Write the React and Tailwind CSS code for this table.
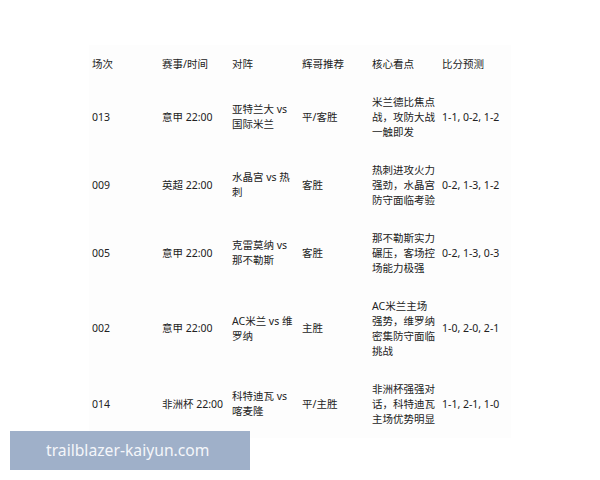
import React from 'react';

const rows = [
  { no: '013', match: '意甲 22:00', teams: '亚特兰大 vs 国际米兰', pick: '平/客胜', note: '米兰德比焦点战，攻防大战一触即发', score: '1-1, 0-2, 1-2' },
  { no: '009', match: '英超 22:00', teams: '水晶宫 vs 热刺', pick: '客胜', note: '热刺进攻火力强劲，水晶宫防守面临考验', score: '0-2, 1-3, 1-2' },
  { no: '005', match: '意甲 22:00', teams: '克雷莫纳 vs 那不勒斯', pick: '客胜', note: '那不勒斯实力碾压，客场控场能力极强', score: '0-2, 1-3, 0-3' },
  { no: '002', match: '意甲 22:00', teams: 'AC米兰 vs 维罗纳', pick: '主胜', note: 'AC米兰主场强势，维罗纳密集防守面临挑战', score: '1-0, 2-0, 2-1' },
  { no: '014', match: '非洲杯 22:00', teams: '科特迪瓦 vs 喀麦隆', pick: '平/主胜', note: '非洲杯强强对话，科特迪瓦主场优势明显', score: '1-1, 2-1, 1-0' },
];

const headers = ['场次', '赛事/时间', '对阵', '辉哥推荐', '核心看点', '比分预测'];

const Row = ({ cells }) => (
  <div className="grid grid-cols-[repeat(6,70px)] items-center">
    {cells.map((c, i) => (
      <div key={i} className="px-[3px] py-[11.5px]">
        {c}
      </div>
    ))}
  </div>
);

export default function App() {
  return (
    <div
      className="relative w-[600px] h-[480px] bg-white overflow-hidden text-[#222] text-[10.5px] leading-[15px]"
      style={{ fontFamily: '"Noto Sans", "Noto Sans CJK SC", sans-serif' }}
    >
      <div className="ml-[89px] mt-[45px] w-[422px] bg-[#fdfdfd]">
        <Row cells={headers} />
        {rows.map((r) => (
          <Row key={r.no} cells={[r.no, r.match, r.teams, r.pick, r.note, r.score]} />
        ))}
      </div>

      {/* watermark */}
      <div className="absolute left-[10px] top-[431px] w-[240px] h-[39px] bg-[#9fb0c9] flex items-center pl-[36px]">
        <span className="text-[#f4f6fa] text-[15.7px]">trailblazer-kaiyun.com</span>
      </div>
    </div>
  );
}
